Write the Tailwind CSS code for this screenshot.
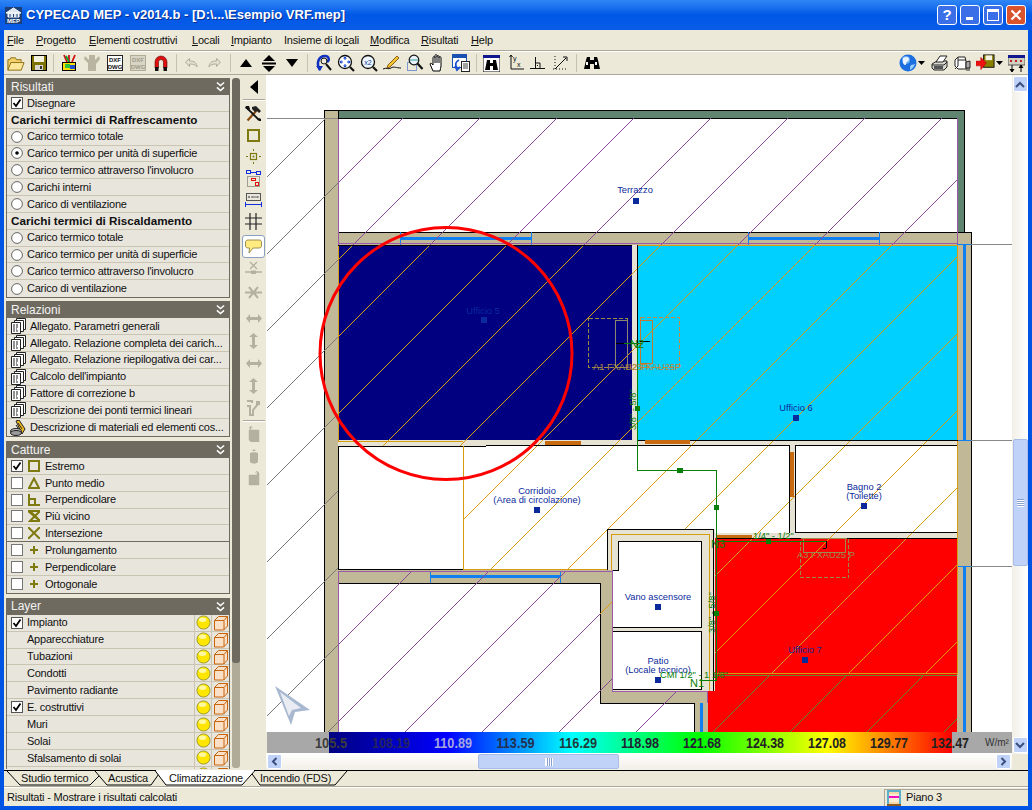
<!DOCTYPE html>
<html lang="it">
<head>
<meta charset="utf-8">
<title>CYPECAD MEP</title>
<script src="https://cdn.jsdelivr.net/npm/@tailwindcss/browser@4"></script>
</head>
<body class="w-[1032px] h-[810px] overflow-hidden bg-[#0054e3] font-['Liberation_Sans',sans-serif] text-[#111] flex flex-col">

<svg class="absolute w-0 h-0">
  <defs>
    <symbol id="doc" viewBox="0 0 15 16">
      <path d="M5.5 .5h9v11h-9z" fill="#fff" stroke="#222"/><path d="M3.5 2.5h9v11h-9z" fill="#fff" stroke="#222"/><path d="M.5 4.5h9v11h-9z" fill="#fff" stroke="#222"/>
      <path d="M2 7h6M2 9h6M2 11h4M2 13h6" stroke="#222" stroke-dasharray="2 1"/>
    </symbol>
    <symbol id="bulb" viewBox="0 0 16 16">
      <circle cx="8" cy="8" r="7" fill="#ffe600" stroke="#9a9a30"/><ellipse cx="7" cy="5" rx="4" ry="2.4" fill="#fff8a0"/>
    </symbol>
    <symbol id="cube" viewBox="0 0 16 16">
      <path d="M1.5 5.500l4-4h9v9.500l-4 4h-9z" fill="#fbe0c8" stroke="#c8640c"/><path d="M1.500 5.500h9.500v9.500M11 5.500l3.500-4" fill="none" stroke="#c8640c"/>
    </symbol>
    <symbol id="chev" viewBox="0 0 10 12">
      <path d="M1 1.500l4 3.500 4-3.500M1 7l4 3.500L9 7" fill="none" stroke="#fff" stroke-width="1.600"/>
    </symbol>
    <symbol id="checked" viewBox="0 0 12 12">
      <rect x=".5" y=".5" width="11" height="11" fill="#fff" stroke="#555"/><path d="M2.500 6l2.500 3 4.500-6.500" fill="none" stroke="#000" stroke-width="1.800"/>
    </symbol>
    <symbol id="unchecked" viewBox="0 0 12 12">
      <rect x=".5" y=".5" width="11" height="11" fill="#fff" stroke="#777"/>
    </symbol>
    <symbol id="radio" viewBox="0 0 12 12">
      <circle cx="6" cy="6" r="5.400" fill="#fff" stroke="#666"/>
    </symbol>
    <symbol id="radioon" viewBox="0 0 12 12">
      <circle cx="6" cy="6" r="5.400" fill="#fff" stroke="#666"/><circle cx="6" cy="6" r="1.800" fill="#000"/>
    </symbol>
    <symbol id="plus" viewBox="0 0 12 12">
      <path d="M6 2v8M2 6h8" stroke="#7f7a10" stroke-width="2"/>
    </symbol>
    <path id="hatch" d="M267 177L369 75M267 254L446 75M267 331L523 75M267 408L600 75M267 485L677 75M267 562L754 75M267 639L831 75M267 716L908 75M267 793L985 75M267 870L1062 75M267 947L1139 75M267 1024L1216 75M267 1101L1293 75M267 1178L1370 75M267 1255L1447 75M267 1332L1524 75M267 1409L1601 75" fill="none"/>
    <clipPath id="cGray"><rect x="267" y="118" width="71" height="614"/></clipPath>
    <clipPath id="cPurple"><rect x="338" y="118" width="619" height="127"/><rect x="338" y="572" width="274" height="160"/><rect x="612" y="691" width="95" height="41"/></clipPath>
    <clipPath id="cOrange"><rect x="338" y="245" width="619" height="325"/><rect x="600" y="529" width="357" height="145"/></clipPath>
    <clipPath id="cGreen"><rect x="709" y="675" width="248" height="57"/></clipPath>
    <linearGradient id="heat" x1="0" x2="1" y1="0" y2="0">
      <stop offset="0" stop-color="#000080"/><stop offset=".19" stop-color="#0000ff"/><stop offset=".39" stop-color="#00ffff"/><stop offset=".594" stop-color="#00ff00"/><stop offset=".798" stop-color="#ffff00"/><stop offset="1" stop-color="#ff0000"/>
    </linearGradient>
  </defs>
</svg>

<!-- Title bar -->
<header class="h-[30px] shrink-0 flex items-center pl-[5px] pr-[6px] bg-linear-to-b from-[#2f86f5] via-[#0058e6] to-[#0a5ce8]">
  <svg class="w-[17px] h-[17px] mt-[1px]" viewBox="0 0 17 17">
    <rect width="17" height="17" fill="#1d3f78"/><path d="M8.500 1L1 6h15zM3 6v4h11V6" fill="#dfe6ef" stroke="#fff"/><path d="M5 7v3M8.500 7v3M12 7v3" stroke="#1d3f78"/>
    <text x="8.500" y="15.500" text-anchor="middle" font-size="6" font-weight="700" fill="#fff">MEP</text>
  </svg>
  <span class="ml-[4px] text-white font-bold text-[13px] [text-shadow:1px_1px_0_#0a2f8f]">CYPECAD MEP - v2014.b - [D:\...\Esempio VRF.mep]</span>
  <div class="ml-auto flex gap-[3px]">
    <div class="w-[20px] h-[20px] rounded-[3px] border border-white bg-[#3a6fe8] text-white font-bold text-[15px] leading-[18px] text-center">?</div>
    <div class="w-[20px] h-[20px] rounded-[3px] border border-white bg-[#3a6fe8] flex items-end pl-[5px] pb-[4px]"><div class="w-[7px] h-[3px] bg-white"></div></div>
    <div class="w-[20px] h-[20px] rounded-[3px] border border-white bg-[#3a6fe8] p-[3px]"><div class="w-full h-full border border-white border-t-[3px]"></div></div>
    <div class="w-[20px] h-[20px] rounded-[3px] border border-white bg-[#d9532c] flex items-center justify-center">
      <svg class="w-[12px] h-[12px]" viewBox="0 0 12 12"><path d="M1.500 1.500l9 9M10.500 1.500l-9 9" stroke="#fff" stroke-width="2.200"/></svg>
    </div>
  </div>
</header>

<div class="mx-[4px] h-[776px] shrink-0 bg-[#ece9d8] flex flex-col">
  <!-- Menu -->
  <nav class="h-[20px] shrink-0 flex items-center text-[11px] tracking-[-.2px] pl-[3px]">
    <span class="w-[29px]"><u>F</u>ile</span>
    <span class="w-[53px]"><u>P</u>rogetto</span>
    <span class="w-[103px]"><u>E</u>lementi costruttivi</span>
    <span class="w-[39px]"><u>L</u>ocali</span>
    <span class="w-[53px]"><u>I</u>mpianto</span>
    <span class="w-[86px]">Insieme di lo<u>c</u>ali</span>
    <span class="w-[51px]"><u>M</u>odifica</span>
    <span class="w-[50px]"><u>R</u>isultati</span>
    <span><u>H</u>elp</span>
  </nav>
  <div class="h-[2px] shrink-0 border-t border-[#aca899] border-b-white bg-white"></div>
  <!-- Toolbar -->
  <div class="h-[23px] shrink-0 flex items-center border-b border-[#aca899]">
    <div class="w-[23px] h-[22px] flex items-center justify-center"><svg class="w-[19px] h-[19px]" viewBox="0 0 20 20"><path d="M2 17V6h2l1-2h5l1 2h5v2" fill="#f4d16c" stroke="#8a6a10"/><path d="M2 17l3-8h14l-3 8z" fill="#ffe79a" stroke="#8a6a10"/></svg></div>
    <div class="w-[23px] h-[22px] flex items-center justify-center"><svg class="w-[16px] h-[16px]" viewBox="0 0 16 16"><rect x=".5" y=".5" width="15" height="15" fill="#7f7300" stroke="#000"/><rect x="3" y="1" width="10" height="6" fill="#f4f2e0"/><rect x="4" y="10" width="8" height="5" fill="#d8d8d0"/><rect x="9" y="11" width="2" height="3" fill="#333"/></svg></div>
    <div class="w-[7px] flex justify-center"><div class="w-[1px] h-[18px] bg-[#c5c2b0]"></div></div>
    <div class="w-[23px] h-[22px] flex items-center justify-center"><svg class="w-[18px] h-[18px]" viewBox="0 0 18 18"><path d="M4 1l3 7M9 1v7M15 1l-3 7" stroke="#d01010" stroke-width="1.800"/><path d="M6 2l3 6" stroke="#10a030" stroke-width="1.800"/><rect x="2.500" y="8.500" width="13" height="8" fill="#ffe000" stroke="#000"/><rect x="5" y="10" width="5" height="4" fill="#30c040"/><rect x="10" y="11" width="5" height="4" fill="#2050d0"/></svg></div>
    <div class="w-[23px] h-[22px] flex items-center justify-center"><svg class="w-[18px] h-[18px]" viewBox="0 0 18 18"><path d="M2 2l4 4V1h6v5l4-4 1 3-4 5v7H5V9L1 5z" fill="#b8b4a0"/></svg></div>
    <div class="w-[23px] h-[22px] flex items-center justify-center"><svg class="w-[18px] h-[18px]" viewBox="0 0 18 18"><rect x="1.500" y="1.500" width="15" height="15" fill="#fff" stroke="#222"/><text x="9" y="8" text-anchor="middle" font-size="6" font-weight="700" fill="#111">DXF</text><text x="9" y="14.500" text-anchor="middle" font-size="6" font-weight="700" fill="#111">DWG</text></svg></div>
    <div class="w-[23px] h-[22px] flex items-center justify-center"><svg class="w-[18px] h-[18px]" viewBox="0 0 18 18"><rect x="1.500" y="1.500" width="15" height="15" fill="#d8d5c5" stroke="#b0ac9a"/><text x="9" y="8" text-anchor="middle" font-size="6" font-weight="700" fill="#a09c8a">DXF</text><text x="9" y="14.500" text-anchor="middle" font-size="6" font-weight="700" fill="#a09c8a">DWG</text></svg></div>
    <div class="w-[23px] h-[22px] flex items-center justify-center"><svg class="w-[16px] h-[18px]" viewBox="0 0 16 18"><path d="M2 14V8a6 6 0 0 1 12 0v6h-3.500V8a2.500 2.500 0 0 0-5 0v6z" fill="#e01010" stroke="#500" stroke-width=".6"/><rect x="2" y="13" width="3.500" height="4" fill="#111"/><rect x="10.500" y="13" width="3.500" height="4" fill="#111"/></svg></div>
    <div class="w-[8px] flex justify-center"><div class="w-[1px] h-[18px] bg-[#c5c2b0]"></div></div>
    <div class="w-[23px] h-[22px] flex items-center justify-center"><svg class="w-[15px] h-[13px]" viewBox="0 0 15 13"><path d="M1.500 5l4-3.500V4c5 0 7.500 2 7.500 6-1.500-2.500-3.500-3-7.500-3v2.500z" fill="#e4e1d0" stroke="#b0ac9a"/></svg></div>
    <div class="w-[23px] h-[22px] flex items-center justify-center"><svg class="w-[15px] h-[13px]" viewBox="0 0 15 13"><path d="M13.500 5l-4-3.500V4C4.500 4 2 6 2 10c1.500-2.500 3.500-3 7.500-3v2.500z" fill="#e4e1d0" stroke="#b0ac9a"/></svg></div>
    <div class="w-[8px] flex justify-center"><div class="w-[1px] h-[18px] bg-[#c5c2b0]"></div></div>
    <div class="w-[23px] h-[22px] flex items-center justify-center"><svg class="w-[12px] h-[8px]" viewBox="0 0 12 8"><path d="M6 0l6 8H0z" fill="#000"/></svg></div>
    <div class="w-[23px] h-[22px] flex items-center justify-center"><svg class="w-[14px] h-[17px]" viewBox="0 0 14 17"><path d="M7 0l6 6H1zM7 17l-6-6h12zM0 8h14" fill="#000"/><rect y="7.500" width="14" height="2" fill="#000"/></svg></div>
    <div class="w-[23px] h-[22px] flex items-center justify-center"><svg class="w-[12px] h-[8px]" viewBox="0 0 12 8"><path d="M6 8L0 0h12z" fill="#000"/></svg></div>
    <div class="w-[8px] flex justify-center"><div class="w-[1px] h-[18px] bg-[#c5c2b0]"></div></div>
    <div class="w-[23px] h-[22px] flex items-center justify-center"><svg class="w-[18px] h-[18px]" viewBox="0 0 18 18"><path d="M6 16C2 10 4 2 11 2c4 0 5 4 2 6" fill="none" stroke="#1030c0" stroke-width="2.500"/><path d="M2 12l4 5 3-5z" fill="#1030c0"/><path d="M12 10l5 6" stroke="#111" stroke-width="2"/><circle cx="10" cy="7" r="3" fill="none" stroke="#111"/></svg></div>
    <div class="w-[23px] h-[22px] flex items-center justify-center"><svg class="w-[18px] h-[18px]" viewBox="0 0 18 18"><circle cx="8" cy="8" r="6.500" fill="#fff" stroke="#111" stroke-width="1.300"/><path d="M8 3v10M3 8h10" stroke="#1040d0" stroke-width="1" stroke-dasharray="3 4"/><path d="M8 2.500l-2 2h4zM8 13.500l-2-2h4zM2.500 8l2-2v4zM13.500 8l-2-2v4z" fill="#1040d0"/><path d="M13 13l4 4" stroke="#111" stroke-width="2.200"/></svg></div>
    <div class="w-[23px] h-[22px] flex items-center justify-center"><svg class="w-[18px] h-[18px]" viewBox="0 0 18 18"><circle cx="8" cy="8" r="6.500" fill="#eef6ff" stroke="#111" stroke-width="1.300"/><text x="8" y="10.500" text-anchor="middle" font-size="7" fill="#1040a0">x2</text><path d="M13 13l4 4" stroke="#111" stroke-width="2.200"/></svg></div>
    <div class="w-[23px] h-[22px] flex items-center justify-center"><svg class="w-[18px] h-[18px]" viewBox="0 0 18 18"><path d="M5 11L14 2l2 2-9 9-3 1z" fill="#f4c430" stroke="#704000" stroke-width=".8"/><path d="M0 15c4-2 5 1 8-1s5 0 10 0" fill="none" stroke="#111"/></svg></div>
    <div class="w-[23px] h-[22px] flex items-center justify-center"><svg class="w-[18px] h-[18px]" viewBox="0 0 18 18"><rect x="1.500" y="8.500" width="9" height="8" fill="none" stroke="#1040d0" stroke-dasharray="1 1"/><circle cx="8" cy="6" r="4.800" fill="#e8f0f8" stroke="#111" stroke-width="1.200"/><path d="M4 6h8" stroke="#30a0a0"/><path d="M11.500 9.500l5 5.500" stroke="#111" stroke-width="2.200"/></svg></div>
    <div class="w-[23px] h-[22px] flex items-center justify-center"><svg class="w-[17px] h-[18px]" viewBox="0 0 17 18"><path d="M4 17L1 10c0-1 2-1 3 1V4c0-2 2-2 2 0V2c0-2 2-2 2 0v1c0-2 2-2 2 0v1c0-2 2-2 2 0v8c0 2-1 3-1 5z" fill="#fff" stroke="#000"/><path d="M6 4v5M8 3v6M10 4v5" stroke="#000"/></svg></div>
    <div class="w-[23px] h-[22px] flex items-center justify-center"><svg class="w-[18px] h-[18px]" viewBox="0 0 18 18"><rect x=".5" y=".5" width="14" height="13" fill="#fff" stroke="#1a50b0"/><rect x="1" y="1" width="13" height="3" fill="#1a50b0"/><rect x="9.500" y="7.500" width="8" height="10" fill="#fff" stroke="#222"/><path d="M11 10h5M11 12h5M11 14h5" stroke="#444"/><path d="M7 6C3 8 3 11 5 14M3 12l2 4 3-3" fill="none" stroke="#1a50d0" stroke-width="1.800"/></svg></div>
    <div class="w-[8px] flex justify-center"><div class="w-[1px] h-[18px] bg-[#c5c2b0]"></div></div>
    <div class="w-[23px] h-[22px] flex items-center justify-center"><svg class="w-[17px] h-[17px]" viewBox="0 0 17 17"><rect width="17" height="17" fill="#fff" stroke="#111"/><rect width="17" height="3" fill="#101890"/><path d="M2 15l2-10h3v3h3V5h3l2 10H10v-4H7v4z" fill="#000"/></svg></div>
    <div class="w-[23px] h-[22px] flex items-center justify-center"><svg class="w-[18px] h-[18px]" viewBox="0 0 18 18"><path d="M5 1v14h13" fill="none" stroke="#111"/><path d="M3.500 3L5 1l1.500 2" fill="none" stroke="#111"/><text x="7" y="7" font-size="7" fill="#111">y</text><text x="11" y="13" font-size="7" fill="#111">x</text></svg></div>
    <div class="w-[23px] h-[22px] flex items-center justify-center"><svg class="w-[16px] h-[16px]" viewBox="0 0 16 16"><path d="M0 13.500h15M5.500 2v11.500M5.500 8h4.500v5.500" fill="none" stroke="#111"/><rect x="7" y="10" width="1" height="1" fill="#111"/></svg></div>
    <div class="w-[23px] h-[22px] flex items-center justify-center"><svg class="w-[17px] h-[17px]" viewBox="0 0 17 17"><path d="M3 14L14 3" stroke="#111"/><path d="M11 2l4 0v4" fill="none" stroke="#111"/><path d="M3 1v15M1 14h15" stroke="#111" stroke-dasharray="1 2"/></svg></div>
    <div class="w-[8px] flex justify-center"><div class="w-[1px] h-[18px] bg-[#c5c2b0]"></div></div>
    <div class="w-[23px] h-[22px] flex items-center justify-center"><svg class="w-[16px] h-[14px]" viewBox="0 0 16 14"><path d="M0 13l2-9 1-3h3v3h4V1h3l1 3 2 9h-6V8H6v5z" fill="#000"/><rect x="2" y="6" width="2" height="3" fill="#fff"/><rect x="11" y="6" width="2" height="3" fill="#fff"/></svg></div>
    <div class="ml-auto flex items-center pr-[3px]">
      <svg class="w-[18px] h-[18px]" viewBox="0 0 18 18"><circle cx="9" cy="9" r="8.500" fill="#1b6fe0"/><circle cx="7" cy="6" r="4" fill="#8cc4ff" opacity=".7"/><path d="M4 4c3-2 6-1 6 1 0 3-3 2-3 5 0 2-2 1-3-1z" fill="#e8f4ff"/><path d="M12 11c2 0 3-1 4-1-1 3-3 5-5 6 0-2 0-4 1-5z" fill="#9fd0ff"/></svg>
      <svg class="w-[7px] h-[4px] ml-[1px] mr-[6px]" viewBox="0 0 7 4"><path d="M0 0h7L3.500 4z" fill="#000"/></svg>
      <svg class="w-[17px] h-[18px] mr-[6px]" viewBox="0 0 17 18"><path d="M1 10l5-3h10v6l-3 3H3l-2-2z" fill="#d8d8d0" stroke="#222"/><path d="M5 8l4-6h7l-4 6z" fill="#fff" stroke="#222"/><path d="M1 11h12l3-3" fill="none" stroke="#222"/><rect x="3" y="12" width="9" height="3" fill="#555"/></svg>
      <svg class="w-[17px] h-[16px] mr-[5px]" viewBox="0 0 17 16"><path d="M1 5l3-3h7l1 4v8H4L1 11z" fill="#fff" stroke="#222"/><path d="M4 2v9l-3 3M4 5h8" fill="none" stroke="#222"/><path d="M12 7l4-1v7h-4z" fill="#aaa" stroke="#222"/><path d="M13 13v3M15 13v3" stroke="#222"/></svg>
      <svg class="w-[19px] h-[18px]" viewBox="0 0 20 18"><rect x="8" y=".5" width="11" height="13" fill="#8a8000" stroke="#111"/><rect x="10" y="1" width="7" height="5" fill="#f4f2e0"/><path d="M0 7h5V3l6 6-6 7v-4H0z" fill="#f01010" stroke="#a00" stroke-width=".5"/></svg>
      <svg class="w-[7px] h-[4px] ml-[1px] mr-[5px]" viewBox="0 0 7 4"><path d="M0 0h7L3.500 4z" fill="#000"/></svg>
      <svg class="w-[17px] h-[17px]" viewBox="0 0 17 17"><rect width="17" height="10" fill="#d0cfc0" stroke="#555"/><rect width="17" height="3" fill="#101890"/><path d="M3 5v2M8 5v2M13 5v2" stroke="#c02020" stroke-width="2"/><path d="M4 10v6M2 14l2 3 2-3M13 17v-6M11 13l2-3 2 3" fill="#000" stroke="#000"/></svg>
    </div>
  </div>

  <!-- Main -->
  <div class="h-[695px] shrink-0 flex">
    <!-- Left panels -->
    <aside class="w-[237px] h-[694px] shrink-0 flex overflow-hidden pt-[3px] pl-[2px]">
      <div class="w-[224px] shrink-0 flex flex-col text-[11px] tracking-[-.22px]">
        <div class="h-[17px] shrink-0 bg-[#6e6a60] text-[#f2f2f2] text-[12px] tracking-normal flex items-center justify-between px-[5px]"><span>Risultati</span><svg class="w-[9px] h-[11px]"><use href="#chev"/></svg></div>
        <div class="border-x border-b border-[#6e6a60] bg-[#e8e5dd] mb-[3px]">
          <div class="h-[16.850px] flex items-center border-b border-[#c9c5b2] pl-[4px] gap-[4px]"><svg class="w-[12px] h-[12px]"><use href="#checked"/></svg>Disegnare</div>
          <div class="h-[16.850px] flex items-center border-b border-[#c9c5b2] pl-[4px] font-bold text-[11.700px] tracking-normal">Carichi termici di Raffrescamento</div>
          <div class="h-[16.850px] flex items-center border-b border-[#c9c5b2] pl-[4px] gap-[4px]"><svg class="w-[12px] h-[12px]"><use href="#radio"/></svg>Carico termico totale</div>
          <div class="h-[16.850px] flex items-center border-b border-[#c9c5b2] pl-[4px] gap-[4px]"><svg class="w-[12px] h-[12px]"><use href="#radioon"/></svg>Carico termico per unità di superficie</div>
          <div class="h-[16.850px] flex items-center border-b border-[#c9c5b2] pl-[4px] gap-[4px]"><svg class="w-[12px] h-[12px]"><use href="#radio"/></svg>Carico termico attraverso l'involucro</div>
          <div class="h-[16.850px] flex items-center border-b border-[#c9c5b2] pl-[4px] gap-[4px]"><svg class="w-[12px] h-[12px]"><use href="#radio"/></svg>Carichi interni</div>
          <div class="h-[16.850px] flex items-center border-b border-[#c9c5b2] pl-[4px] gap-[4px]"><svg class="w-[12px] h-[12px]"><use href="#radio"/></svg>Carico di ventilazione</div>
          <div class="h-[16.850px] flex items-center border-b border-[#c9c5b2] pl-[4px] font-bold text-[11.700px] tracking-normal">Carichi termici di Riscaldamento</div>
          <div class="h-[16.850px] flex items-center border-b border-[#c9c5b2] pl-[4px] gap-[4px]"><svg class="w-[12px] h-[12px]"><use href="#radio"/></svg>Carico termico totale</div>
          <div class="h-[16.850px] flex items-center border-b border-[#c9c5b2] pl-[4px] gap-[4px]"><svg class="w-[12px] h-[12px]"><use href="#radio"/></svg>Carico termico per unità di superficie</div>
          <div class="h-[16.850px] flex items-center border-b border-[#c9c5b2] pl-[4px] gap-[4px]"><svg class="w-[12px] h-[12px]"><use href="#radio"/></svg>Carico termico attraverso l'involucro</div>
          <div class="h-[16.850px] flex items-center pl-[4px] gap-[4px]"><svg class="w-[12px] h-[12px]"><use href="#radio"/></svg>Carico di ventilazione</div>
        </div>

        <div class="h-[17px] shrink-0 bg-[#6e6a60] text-[#f2f2f2] text-[12px] tracking-normal flex items-center justify-between px-[5px]"><span>Relazioni</span><svg class="w-[9px] h-[11px]"><use href="#chev"/></svg></div>
        <div class="border-x border-b border-[#6e6a60] bg-[#e8e5dd] mb-[4px] whitespace-nowrap">
          <div class="h-[16.850px] flex items-center border-b border-[#c9c5b2] pl-[4px] gap-[4px]"><svg class="w-[15px] h-[16px] shrink-0"><use href="#doc"/></svg>Allegato. Parametri generali</div>
          <div class="h-[16.850px] flex items-center border-b border-[#c9c5b2] pl-[4px] gap-[4px]"><svg class="w-[15px] h-[16px] shrink-0"><use href="#doc"/></svg>Allegato. Relazione completa dei carich...</div>
          <div class="h-[16.850px] flex items-center border-b border-[#c9c5b2] pl-[4px] gap-[4px]"><svg class="w-[15px] h-[16px] shrink-0"><use href="#doc"/></svg>Allegato. Relazione riepilogativa dei car...</div>
          <div class="h-[16.850px] flex items-center border-b border-[#c9c5b2] pl-[4px] gap-[4px]"><svg class="w-[15px] h-[16px] shrink-0"><use href="#doc"/></svg>Calcolo dell'impianto</div>
          <div class="h-[16.850px] flex items-center border-b border-[#c9c5b2] pl-[4px] gap-[4px]"><svg class="w-[15px] h-[16px] shrink-0"><use href="#doc"/></svg>Fattore di correzione b</div>
          <div class="h-[16.850px] flex items-center border-b border-[#c9c5b2] pl-[4px] gap-[4px]"><svg class="w-[15px] h-[16px] shrink-0"><use href="#doc"/></svg>Descrizione dei ponti termici lineari</div>
          <div class="h-[16.850px] flex items-center pl-[3px] gap-[4px]"><svg class="w-[16px] h-[16px] shrink-0" viewBox="0 0 16 16"><path d="M6 1l3-1 6 9-3 5z" fill="#f2b820" stroke="#222"/><path d="M8 3l4 6M6 5l4 6" stroke="#222"/><ellipse cx="6" cy="11" rx="5.500" ry="2.500" fill="#c8c8c8" stroke="#222"/><ellipse cx="6" cy="13" rx="5.500" ry="2.500" fill="#9a9a9a" stroke="#222"/></svg>Descrizione di materiali ed elementi cos...</div>
        </div>

        <div class="h-[17px] shrink-0 bg-[#6e6a60] text-[#f2f2f2] text-[12px] tracking-normal flex items-center justify-between px-[5px]"><span>Catture</span><svg class="w-[9px] h-[11px]"><use href="#chev"/></svg></div>
        <div class="border-x border-b border-[#6e6a60] bg-[#e8e5dd] mb-[4px]">
          <div class="h-[16.850px] flex items-center border-b border-[#c9c5b2] pl-[4px]"><svg class="w-[12px] h-[12px]"><use href="#checked"/></svg><svg class="w-[12px] h-[12px] ml-[5px] mr-[5px]" viewBox="0 0 12 12"><rect x="1" y="1" width="10" height="10" fill="none" stroke="#7f7a10" stroke-width="2"/></svg>Estremo</div>
          <div class="h-[16.850px] flex items-center border-b border-[#c9c5b2] pl-[4px]"><svg class="w-[12px] h-[12px]"><use href="#unchecked"/></svg><svg class="w-[12px] h-[12px] ml-[5px] mr-[5px]" viewBox="0 0 12 12"><path d="M6 1.500L11 11H1z" fill="none" stroke="#7f7a10" stroke-width="2"/></svg>Punto medio</div>
          <div class="h-[16.850px] flex items-center border-b border-[#c9c5b2] pl-[4px]"><svg class="w-[12px] h-[12px]"><use href="#unchecked"/></svg><svg class="w-[12px] h-[12px] ml-[5px] mr-[5px]" viewBox="0 0 12 12"><path d="M1 0v11h11M1 5h6v6" fill="none" stroke="#7f7a10" stroke-width="2"/></svg>Perpendicolare</div>
          <div class="h-[16.850px] flex items-center border-b border-[#c9c5b2] pl-[4px]"><svg class="w-[12px] h-[12px]"><use href="#unchecked"/></svg><svg class="w-[12px] h-[12px] ml-[5px] mr-[5px]" viewBox="0 0 12 12"><path d="M0 1h12L2 11h10z" fill="none" stroke="#7f7a10" stroke-width="2"/><path d="M2 1l10 10" stroke="#7f7a10" stroke-width="2"/></svg>Più vicino</div>
          <div class="h-[16.850px] flex items-center border-b border-[#6e6a60] pl-[4px]"><svg class="w-[12px] h-[12px]"><use href="#unchecked"/></svg><svg class="w-[12px] h-[12px] ml-[5px] mr-[5px]" viewBox="0 0 12 12"><path d="M0 0l12 12M12 0L0 12" stroke="#7f7a10" stroke-width="2"/></svg>Intersezione</div>
          <div class="h-[16.850px] flex items-center border-b border-[#c9c5b2] pl-[4px]"><svg class="w-[12px] h-[12px]"><use href="#unchecked"/></svg><svg class="w-[12px] h-[12px] ml-[5px] mr-[5px]"><use href="#plus"/></svg>Prolungamento</div>
          <div class="h-[16.850px] flex items-center border-b border-[#c9c5b2] pl-[4px]"><svg class="w-[12px] h-[12px]"><use href="#unchecked"/></svg><svg class="w-[12px] h-[12px] ml-[5px] mr-[5px]"><use href="#plus"/></svg>Perpendicolare</div>
          <div class="h-[16.850px] flex items-center pl-[4px]"><svg class="w-[12px] h-[12px]"><use href="#unchecked"/></svg><svg class="w-[12px] h-[12px] ml-[5px] mr-[5px]"><use href="#plus"/></svg>Ortogonale</div>
        </div>

        <div class="h-[17px] shrink-0 bg-[#6e6a60] text-[#f2f2f2] text-[12px] tracking-normal flex items-center justify-between px-[5px]"><span>Layer</span><svg class="w-[9px] h-[11px]"><use href="#chev"/></svg></div>
        <div class="border-x border-[#6e6a60] bg-[#e8e5dd]">
          <div class="h-[16.900px] flex items-center border-b border-[#c9c5b2] pl-[4px]"><svg class="w-[12px] h-[12px] mr-[4px]"><use href="#checked"/></svg>Impianto<div class="ml-auto h-full flex border-l border-[#c9c5b2]"><div class="w-[17px] flex items-center justify-center border-r border-[#c9c5b2]"><svg class="w-[15px] h-[15px]"><use href="#bulb"/></svg></div><div class="w-[17px] flex items-center justify-center"><svg class="w-[16px] h-[16px]"><use href="#cube"/></svg></div></div></div>
          <div class="h-[16.900px] flex items-center border-b border-[#c9c5b2] pl-[20px]">Apparecchiature<div class="ml-auto h-full flex border-l border-[#c9c5b2]"><div class="w-[17px] flex items-center justify-center border-r border-[#c9c5b2]"><svg class="w-[15px] h-[15px]"><use href="#bulb"/></svg></div><div class="w-[17px] flex items-center justify-center"><svg class="w-[16px] h-[16px]"><use href="#cube"/></svg></div></div></div>
          <div class="h-[16.900px] flex items-center border-b border-[#c9c5b2] pl-[20px]">Tubazioni<div class="ml-auto h-full flex border-l border-[#c9c5b2]"><div class="w-[17px] flex items-center justify-center border-r border-[#c9c5b2]"><svg class="w-[15px] h-[15px]"><use href="#bulb"/></svg></div><div class="w-[17px] flex items-center justify-center"><svg class="w-[16px] h-[16px]"><use href="#cube"/></svg></div></div></div>
          <div class="h-[16.900px] flex items-center border-b border-[#c9c5b2] pl-[20px]">Condotti<div class="ml-auto h-full flex border-l border-[#c9c5b2]"><div class="w-[17px] flex items-center justify-center border-r border-[#c9c5b2]"><svg class="w-[15px] h-[15px]"><use href="#bulb"/></svg></div><div class="w-[17px] flex items-center justify-center"><svg class="w-[16px] h-[16px]"><use href="#cube"/></svg></div></div></div>
          <div class="h-[16.900px] flex items-center border-b border-[#c9c5b2] pl-[20px]">Pavimento radiante<div class="ml-auto h-full flex border-l border-[#c9c5b2]"><div class="w-[17px] flex items-center justify-center border-r border-[#c9c5b2]"><svg class="w-[15px] h-[15px]"><use href="#bulb"/></svg></div><div class="w-[17px] flex items-center justify-center"><svg class="w-[16px] h-[16px]"><use href="#cube"/></svg></div></div></div>
          <div class="h-[16.900px] flex items-center border-b border-[#c9c5b2] pl-[4px]"><svg class="w-[12px] h-[12px] mr-[4px]"><use href="#checked"/></svg>E. costruttivi<div class="ml-auto h-full flex border-l border-[#c9c5b2]"><div class="w-[17px] flex items-center justify-center border-r border-[#c9c5b2]"><svg class="w-[15px] h-[15px]"><use href="#bulb"/></svg></div><div class="w-[17px] flex items-center justify-center"><svg class="w-[16px] h-[16px]"><use href="#cube"/></svg></div></div></div>
          <div class="h-[16.900px] flex items-center border-b border-[#c9c5b2] pl-[20px]">Muri<div class="ml-auto h-full flex border-l border-[#c9c5b2]"><div class="w-[17px] flex items-center justify-center border-r border-[#c9c5b2]"><svg class="w-[15px] h-[15px]"><use href="#bulb"/></svg></div><div class="w-[17px] flex items-center justify-center"><svg class="w-[16px] h-[16px]"><use href="#cube"/></svg></div></div></div>
          <div class="h-[16.900px] flex items-center border-b border-[#c9c5b2] pl-[20px]">Solai<div class="ml-auto h-full flex border-l border-[#c9c5b2]"><div class="w-[17px] flex items-center justify-center border-r border-[#c9c5b2]"><svg class="w-[15px] h-[15px]"><use href="#bulb"/></svg></div><div class="w-[17px] flex items-center justify-center"><svg class="w-[16px] h-[16px]"><use href="#cube"/></svg></div></div></div>
          <div class="h-[16.900px] flex items-center border-b border-[#c9c5b2] pl-[20px]">Sfalsamento di solai<div class="ml-auto h-full flex border-l border-[#c9c5b2]"><div class="w-[17px] flex items-center justify-center border-r border-[#c9c5b2]"><svg class="w-[15px] h-[15px]"><use href="#bulb"/></svg></div><div class="w-[17px] flex items-center justify-center"><svg class="w-[16px] h-[16px]"><use href="#cube"/></svg></div></div></div>
          <div class="h-[16.900px] flex items-center border-b border-[#c9c5b2] pl-[20px]"><div class="ml-auto h-full flex border-l border-[#c9c5b2]"><div class="w-[17px] flex items-center justify-center border-r border-[#c9c5b2]"><svg class="w-[15px] h-[15px]"><use href="#bulb"/></svg></div><div class="w-[17px] flex items-center justify-center"><svg class="w-[16px] h-[16px]"><use href="#cube"/></svg></div></div></div>
        </div>
      </div>
      <div class="ml-[2px] w-[8px] h-[690px] shrink-0 bg-[#b0ab99] rounded-[3px] overflow-hidden"><div class="h-[585px] bg-[#6e6a60] rounded-[3px]"></div></div>
    </aside>

    <!-- Tool strip -->
    <div class="w-[25px] shrink-0 flex flex-col items-center pt-[1px] text-[#b5b1a0]">
      <div class="h-[22px] w-full flex items-center justify-center"><svg class="w-[8px] h-[14px]" viewBox="0 0 8 14"><path d="M8 0v14L0 7z" fill="#000"/></svg></div>
      <div class="w-[22px] h-[2px] mt-[1px] mb-[2px] border-t border-[#aca899] bg-white"></div>
      <div class="h-[21.600px] w-full flex items-center justify-center"><svg class="w-[17px] h-[17px]" viewBox="0 0 17 17"><path d="M2.500 15.500L12 5" stroke="#8a4a10" stroke-width="2.200"/><path d="M7 2l4-1 5 5-2 2-2-2-2 1-3-3z" fill="#222"/><path d="M2 3l12 12" stroke="#111" stroke-width="1.800"/><path d="M1 1l3 0 1 3-2 1-3-2z" fill="#111"/><path d="M14 13l2 1 0 2-2 0-1-2z" fill="#111"/></svg></div>
      <div class="h-[21.600px] w-full flex items-center justify-center"><svg class="w-[13px] h-[13px]" viewBox="0 0 13 13"><rect x="1" y="1" width="11" height="11" fill="none" stroke="#7f7a10" stroke-width="2"/></svg></div>
      <div class="h-[21.600px] w-full flex items-center justify-center"><svg class="w-[15px] h-[15px]" viewBox="0 0 15 15"><rect x="4.500" y="4.500" width="6" height="6" fill="none" stroke="#7f7a10" stroke-width="1.200"/><circle cx="7.500" cy="7.500" r="1" fill="#7f7a10"/><path d="M7.500 0v2M7.500 13v2M0 7.500h2M13 7.500h2" stroke="#7f7a10"/></svg></div>
      <div class="h-[21.600px] w-full flex items-center justify-center"><svg class="w-[15px] h-[17px]" viewBox="0 0 15 17"><rect x=".5" y=".5" width="4" height="3" fill="none" stroke="#1030e0"/><rect x="10.500" y="1.500" width="4" height="3" fill="none" stroke="#1030e0"/><path d="M5 2.500h5" stroke="#1030e0"/><rect x="1.500" y="6.500" width="12" height="10" fill="none" stroke="#555" stroke-dasharray="1 1"/><rect x="5.500" y="8.500" width="4" height="2" fill="none" stroke="#e01010"/><rect x="9.500" y="12.500" width="3" height="3" fill="none" stroke="#e01010"/></svg></div>
      <div class="h-[21.600px] w-full flex items-center justify-center"><svg class="w-[17px] h-[15px]" viewBox="0 0 17 15"><rect x="1.500" y=".5" width="14" height="7" fill="#e8e5dd" stroke="#555"/><path d="M4 3v3M8 3v3M12 3v3M3 4h11" stroke="#666" stroke-dasharray="2 1"/><path d="M.5 9v5M16.500 9v5M0 11.500h17" stroke="#1030e0"/></svg></div>
      <div class="h-[21.600px] w-full flex items-center justify-center"><svg class="w-[17px] h-[17px]" viewBox="0 0 17 17"><path d="M5 0v17M11 0v17M0 5h17M0 11h17" stroke="#222" stroke-width="1.200"/></svg></div>
      <div class="w-[23px] h-[23px] mt-[2px] rounded-[3px] border border-[#8aa0c0] bg-white flex items-center justify-center"><svg class="w-[17px] h-[15px]" viewBox="0 0 17 15"><path d="M3 1h11c2 0 2.500 1 2.500 2v4c0 1-1 2-2.500 2H8l-4 5 .5-5H3C1.500 9 .5 8 .5 7V3C.5 2 1.500 1 3 1z" fill="#ffeb80" stroke="#9a9050"/></svg></div>
      <div class="h-[22px] w-full flex items-center justify-center"><svg class="w-[17px] h-[15px]" viewBox="0 0 17 15"><path d="M5 1l7 7M12 1L5 8" stroke="currentColor" stroke-width="1.300"/><path d="M0 11h17" stroke="currentColor" stroke-width="1.500"/><rect x="6" y="9.500" width="5" height="3.500" fill="currentColor"/></svg></div>
      <div class="h-[22px] w-full mt-[2px] flex items-center justify-center"><svg class="w-[17px] h-[13px]" viewBox="0 0 17 13"><path d="M0 6.500h17M4 1l9 11M13 1L4 12" stroke="currentColor" stroke-width="2"/></svg></div>
      <div class="h-[22.300px] w-full mt-[4px] flex items-center justify-center"><svg class="w-[16px] h-[9px]" viewBox="0 0 16 9"><path d="M4 0v3h8V0l4 4.500L12 9V6H4v3L0 4.500z" fill="currentColor"/></svg></div>
      <div class="h-[22.300px] w-full flex items-center justify-center"><svg class="w-[9px] h-[16px]" viewBox="0 0 9 16"><path d="M0 4h3v8H0l4.500 4L9 12H6V4h3L4.500 0z" fill="currentColor"/></svg></div>
      <div class="h-[22.300px] w-full flex items-center justify-center"><svg class="w-[16px] h-[9px]" viewBox="0 0 16 9"><path d="M4 0v3h8V0l4 4.500L12 9V6H4v3L0 4.500z" fill="currentColor"/></svg></div>
      <div class="h-[22.300px] w-full flex items-center justify-center"><svg class="w-[9px] h-[16px]" viewBox="0 0 9 16"><path d="M0 4h3v8H0l4.500 4L9 12H6V4h3L4.500 0z" fill="currentColor"/></svg></div>
      <div class="h-[22.300px] w-full flex items-center justify-center"><svg class="w-[15px] h-[16px]" viewBox="0 0 15 16"><path d="M1 1h5v2M1 6h3v9h3v-5l6-7" fill="none" stroke="currentColor" stroke-width="2"/><rect x="10" y="1" width="4" height="4" fill="currentColor"/></svg></div>
      <div class="w-[22px] h-[2px] mt-[1px] mb-[1px] border-t border-[#aca899] bg-white"></div>
      <div class="h-[22.500px] w-full flex items-center justify-center"><svg class="w-[12px] h-[16px]" viewBox="0 0 12 16"><path d="M1 4h10v12H3L1 14zM3 4V0L1 2M3 0l2 2" fill="currentColor" stroke="currentColor" stroke-width=".5"/></svg></div>
      <div class="h-[22.500px] w-full flex items-center justify-center"><svg class="w-[10px] h-[16px]" viewBox="0 0 10 16"><path d="M5 0l2 2H3zM1 4c2-1 6-1 8 0v9c-2 2-6 2-8 0z" fill="currentColor"/></svg></div>
      <div class="h-[22.500px] w-full flex items-center justify-center"><svg class="w-[12px] h-[16px]" viewBox="0 0 12 16"><path d="M1 4h8l2-2v12H1zM9 4V0l2 2M9 0L7 2" fill="currentColor" stroke="currentColor" stroke-width=".5"/></svg></div>
    </div>

    <!-- Canvas column -->
    <div class="w-[746px] shrink-0 flex flex-col">
      <svg class="block w-[746px] h-[657px] bg-white" viewBox="266 75 746 657" shape-rendering="crispEdges">
        <!-- Walls -->
        <rect x="324.500" y="110.500" width="640" height="130" fill="#5f8570" stroke="#000"/>
        <rect x="324.500" y="110.500" width="13.500" height="622" fill="#c0b896" stroke="#000"/>
        <rect x="338" y="118" width="619" height="114" fill="#fff"/>
        <rect x="338" y="232.500" width="633" height="13" fill="#c0b896"/>
        <path d="M338 232.500H971.500V732" fill="none" stroke="#000"/>
        <rect x="957" y="245" width="14" height="487" fill="#c0b896"/>
        <path d="M338 118.500H957.500V232" fill="none" stroke="#000"/>
        <!-- Rooms -->
        <rect x="338" y="245" width="294" height="196" fill="#000080"/>
        <rect x="632" y="245" width="6" height="196" fill="#e6e2d4"/>
        <rect x="638" y="245" width="319" height="195" fill="#00d0ff"/>
        <rect x="338" y="440" width="619" height="6" fill="#e6e2d4"/>
        <rect x="339" y="446" width="618" height="124" fill="#fff"/>
        <rect x="790" y="445" width="5" height="93" fill="#e6e2d4"/>
        <rect x="700" y="533" width="257" height="5" fill="#e6e2d4"/>
        <rect x="713" y="538" width="244" height="153" fill="#ff0000"/>
        <rect x="708" y="691" width="249" height="41" fill="#ff0000"/>
        <rect x="338" y="570" width="274" height="13" fill="#c0b896"/>
        <rect x="600" y="583" width="12" height="120" fill="#c0b896"/>
        <rect x="600" y="691" width="107" height="12" fill="#c0b896"/>
        <rect x="695" y="703" width="13" height="29" fill="#c0b896"/>
        <rect x="339" y="583" width="261" height="149" fill="#fff"/>
        <rect x="600" y="703" width="95" height="29" fill="#fff"/>
        <rect x="700" y="703" width="3" height="29" fill="#1080f0"/>
        <path d="M338 583.500H600.500V703.500H694.500V732" fill="none" stroke="#000"/>
        <!-- Right wall blue -->
        <rect x="963" y="245" width="3" height="195" fill="#1080f0"/>
        <rect x="963" y="566" width="3" height="166" fill="#1080f0"/>
        <path d="M971 244.500H1012M971 440.500H1012M971 566.500H1012M267 118.500H338" stroke="#888"/>
        <path d="M957 244.500H971M957 440.500H971M957 566.500H971" stroke="#1080f0"/>
        <!-- Windows -->
        <path d="M400.500 232V245M531.500 232V245M748.500 232V245M879.500 232V245M430.500 571V583M560.500 571V583" stroke="#1080f0"/>
        <path d="M400 238.500H531M748 238.500H879M430 576.500H560" stroke="#1080f0" stroke-width="3"/>
        <!-- Hatches -->
        <g clip-path="url(#cGray)" stroke="#777"><use href="#hatch"/></g>
        <g clip-path="url(#cPurple)" stroke="#8a4a9a"><use href="#hatch"/></g>
        <g clip-path="url(#cOrange)" stroke="#d89c10"><use href="#hatch"/></g>
        <g clip-path="url(#cGreen)" stroke="#5f8a30"><use href="#hatch"/></g>
        <!-- Outlines -->
        <path d="M338.500 118.500V245M338 243.500H957.500V118M338.500 572V732M338 571.500H612.500V691.500H707.500V703" fill="none" stroke="#9a5aa8"/>
        <path d="M338.500 245.500H632M338.500 245V441.500H463" fill="none" stroke="#d89c10"/>
        <path d="M638 245.500H957M957.500 245V674M463.500 446V569.500H611" fill="none" stroke="#d89c10"/>
        <path d="M338 245.500H632M637.500 245V441M638 440.500H957.500M338 446.500H486M486 445.500H789.500V532.500M795.500 445.500V532.500H957M795 445.500H957M716 538.500H957" fill="none" stroke="#000"/>
        <rect x="339" y="447" width="124" height="122" fill="#fff"/>
        <path d="M338.500 446.500V569.500H463" fill="none" stroke="#000"/>
        <path d="M463.500 446V569.500" stroke="#d89c10"/>
        <path d="M710 673.500H957" stroke="#d89c10"/>
        <path d="M710 675.500H957" stroke="#5f8a30"/>
        <path d="M545 443H581M645 442H690" stroke="#c86a10" stroke-width="4"/>
        <path d="M792 452V497" stroke="#c86a10" stroke-width="4"/>
        <path d="M716 536H752" stroke="#c86a10" stroke-width="3"/>
        <!-- Elevator block -->
        <path d="M607 570V529H715V691H612V570z" fill="#e6e2d4"/>
        <path d="M607.500 570V529.500H713.500M713.500 529V691" fill="none" stroke="#000"/>
        <path d="M611.500 570V534.500H709.500V691" fill="none" stroke="#d89c10"/>
        <path d="M618.500 541.500H701.500V627.500H612.500V570.500H618.500z" fill="#fff" stroke="#000"/>
        <rect x="612.500" y="631.500" width="89" height="58" fill="#fff" stroke="#000"/>
        <path d="M612.500 570V691H707V703" fill="none" stroke="#9a5aa8"/>
        <!-- AC units -->
        <g fill="none">
          <rect x="588.500" y="318.500" width="39" height="49" stroke="#9a8a40" stroke-dasharray="4 2"/>
          <rect x="615.500" y="320.500" width="12" height="47" stroke="#8f8670"/>
          <rect x="640.500" y="317.500" width="39" height="50" stroke="#c08a40" stroke-dasharray="4 2"/>
          <rect x="640.500" y="320.500" width="12" height="43" stroke="#c07a30"/>
          <rect x="800.500" y="538.500" width="48" height="39" stroke="#9a8a50" stroke-dasharray="4 2"/>
          <rect x="803.500" y="538.500" width="42" height="14" stroke="#9a8a50"/>
        </g>
        <path d="M616 343.500H630M640 341.500H650M826.500 541V548M826 548.500H823" stroke="#000"/>
        <!-- Pipes -->
        <path d="M637.500 345V470.500H716.500V680.500H700M716.500 541.500H826M624 343.500H642" fill="none" stroke="#088008"/>
        <path d="M635 406h5v5h-5zM677 468h6v5h-6zM714 505h5v5h-5zM714 611h5v5h-5zM766 539h5v5h-5z" fill="#088008"/>
        <!-- Circle -->
        <circle cx="446" cy="353.500" r="126" fill="none" stroke="#f00" stroke-width="3" shape-rendering="auto"/>
        <!-- Room labels -->
        <g font-size="9.300px" fill="#0a2a9c" text-anchor="middle" shape-rendering="auto">
          <text x="635" y="193">Terrazzo</text>
          <text x="483" y="314" fill="#0a2a9c">Ufficio 5</text>
          <text x="796" y="411">Ufficio 6</text>
          <text x="537" y="494">Corridoio</text>
          <text x="537" y="503">(Area di circolazione)</text>
          <text x="864" y="490">Bagno 2</text>
          <text x="864" y="499">(Toilette)</text>
          <text x="658" y="600">Vano ascensore</text>
          <text x="658" y="664">Patio</text>
          <text x="658" y="673">(Locale tecnico)</text>
          <text x="805" y="653">Ufficio 7</text>
        </g>
        <path d="M633 198h6v6h-6zM481 317h6v6h-6zM793 415h6v6h-6zM534 507h6v6h-6zM861 503h6v6h-6zM655 604h6v6h-6zM655 677h6v6h-6zM802 657h6v6h-6z" fill="#0a2a9c"/>
        <!-- Technical labels -->
        <g font-size="9.300px" shape-rendering="auto">
          <text x="593" y="370" fill="#b09040">A1 FXAU25P</text>
          <text x="626" y="370" fill="#b88838">A2 FXAU25P</text>
          <text x="797" y="558" fill="#9a8a50">A3  FXAU25 P</text>
          <text x="630" y="348" fill="#088008" font-size="11px">N2</text>
          <text x="711" y="548" fill="#088008" font-size="11px">N3</text>
          <text x="690" y="687" fill="#088008" font-size="11px">N1</text>
          <text x="753" y="539" fill="#088008">1/4" - 1/2"</text>
          <text x="660" y="678" fill="#088008">CMI  1/2" - 1 1/8"</text>
          <text transform="translate(715 633) rotate(-90)" fill="#088008">3/8" - 5/8"</text>
          <text transform="translate(636 430) rotate(-90)" fill="#088008">3/8" - 5/8"</text>
        </g>
        <!-- North arrow -->
        <path d="M275 686L310 710L295 712L291 725z" fill="#a8b8d0" shape-rendering="auto"/>
        <path d="M280 692L301 708L292 710L289 716z" fill="#fff" opacity=".75" shape-rendering="auto"/>
      </svg>

      <svg class="block w-[746px] h-[21px]" viewBox="266 732 746 21">
        <rect x="267" y="732" width="745" height="21" fill="#a8a8a8"/>
        <rect x="329" y="732" width="623" height="21" fill="url(#heat)"/>
        <g font-size="14.500px" font-weight="700" text-anchor="middle" lengthAdjust="spacingAndGlyphs">
          <text x="331" y="748" textLength="32" lengthAdjust="spacingAndGlyphs" fill="#3c3c3c">105.5</text>
          <text x="391" y="748" textLength="38" lengthAdjust="spacingAndGlyphs" fill="#24245c">108.19</text>
          <text x="453" y="748" textLength="38" lengthAdjust="spacingAndGlyphs" fill="#a6a6e0">110.89</text>
          <text x="515.500" y="748" textLength="38" lengthAdjust="spacingAndGlyphs" fill="#24304f">113.59</text>
          <text x="578" y="748" textLength="38" lengthAdjust="spacingAndGlyphs" fill="#1e3a3a">116.29</text>
          <text x="640" y="748" textLength="38" lengthAdjust="spacingAndGlyphs" fill="#223">118.98</text>
          <text x="702" y="748" textLength="38" lengthAdjust="spacingAndGlyphs" fill="#223">121.68</text>
          <text x="765" y="748" textLength="38" lengthAdjust="spacingAndGlyphs" fill="#222">124.38</text>
          <text x="827" y="748" textLength="38" lengthAdjust="spacingAndGlyphs" fill="#222">127.08</text>
          <text x="889" y="748" textLength="38" lengthAdjust="spacingAndGlyphs" fill="#222">129.77</text>
          <text x="950" y="748" textLength="38" lengthAdjust="spacingAndGlyphs" fill="#222">132.47</text>
        </g>
        <text x="985" y="746" font-size="10px" fill="#333">W/m²</text>
      </svg>

      <div class="h-[17px] shrink-0 bg-linear-to-b from-white to-[#f1efe6] flex items-center pl-[1px]">
        <div class="w-[15px] h-[15px] rounded-[2px] border border-white bg-[#c1d2f8] flex items-center justify-center"><svg class="w-[7px] h-[9px]" viewBox="0 0 7 9"><path d="M5.500 1L2 4.500 5.500 8" fill="none" stroke="#3a4e80" stroke-width="2"/></svg></div>
        <div class="ml-[196px] w-[141px] h-[15px] rounded-[2px] border border-[#a8bce8] bg-[#c1d2f8] flex items-center justify-center"><div class="w-[8px] h-[8px] border-x border-white bg-[repeating-linear-gradient(90deg,#fff_0,#fff_1px,#8aa0d0_1px,#8aa0d0_2px)]"></div></div>
        <div class="ml-auto mr-[1px] w-[15px] h-[15px] rounded-[2px] border border-white bg-[#c1d2f8] flex items-center justify-center"><svg class="w-[7px] h-[9px]" viewBox="0 0 7 9"><path d="M1.500 1L5 4.500 1.500 8" fill="none" stroke="#3a4e80" stroke-width="2"/></svg></div>
      </div>
    </div>

    <!-- Vertical scrollbar -->
    <div class="w-[16px] shrink-0 flex flex-col">
      <div class="h-[679px] bg-linear-to-r from-[#f1efe6] to-white flex flex-col items-center pt-[1px]">
        <div class="w-[15px] h-[16px] rounded-[2px] border border-white bg-[#c1d2f8] flex items-center justify-center"><svg class="w-[10px] h-[7px]" viewBox="0 0 10 7"><path d="M1 6l4-4 4 4" fill="none" stroke="#3a4e80" stroke-width="2"/></svg></div>
        <div class="mt-[347px] w-[15px] h-[127px] rounded-[2px] border border-[#a8bce8] bg-[#c1d2f8] flex items-center justify-center"><div class="w-[7px] h-[8px] bg-[repeating-linear-gradient(0deg,#fff_0,#fff_1px,#8aa0d0_1px,#8aa0d0_2px)]"></div></div>
        <div class="mt-[171px] w-[15px] h-[16px] rounded-[2px] border border-white bg-[#c1d2f8] flex items-center justify-center"><svg class="w-[10px] h-[7px]" viewBox="0 0 10 7"><path d="M1 1l4 4 4-4" fill="none" stroke="#3a4e80" stroke-width="2"/></svg></div>
      </div>
    </div>
  </div>

  <!-- Tabs -->
  <svg class="block w-[1024px] h-[16px] shrink-0" viewBox="4 770 1024 16" font-size="11px" letter-spacing="-.2" fill="#111">
    <path d="M4 770.500H1028" stroke="#000"/>
    <path d="M7 771l13 14h70l14-14" fill="#ece9d8" stroke="#000"/>
    <path d="M95 771l12 14h44l10-14" fill="#ece9d8" stroke="#000"/>
    <path d="M250 771l10 14h75l12-14" fill="#ece9d8" stroke="#000"/>
    <path d="M155 770.500l11 14.500h76l13-14.500z" fill="#fff" stroke="#000"/>
    <path d="M156 770.500h98" stroke="#fff" stroke-width="1.500"/>
    <text x="21" y="782">Studio termico</text>
    <text x="108" y="782">Acustica</text>
    <text x="169" y="782">Climatizzazione</text>
    <text x="260" y="782">Incendio (FDS)</text>
  </svg>
  <div class="h-[2px] shrink-0 border-t border-[#aca899] bg-white"></div>

  <!-- Status -->
  <footer class="h-[18px] shrink-0 flex items-center text-[11px] tracking-[-.2px] pl-[3px]">
    <span>Risultati - Mostrare i risultati calcolati</span>
    <div class="ml-auto w-[144px] h-[17px] border-l border-t border-[#aca899] flex items-center pl-[2px] gap-[5px]">
      <svg class="w-[14px] h-[16px]" viewBox="0 0 14 16"><rect width="14" height="16" fill="#5ab0c8"/><rect x="2" y="2" width="10" height="12" fill="#f4d8a8"/><path d="M2 5h10M2 9h10M2 11h10" stroke="#fff"/><path d="M2 7h10" stroke="#f010c0" stroke-width="2"/><rect y="14" width="14" height="2" fill="#8a5a20"/></svg>
      <span>Piano 3</span>
    </div>
  </footer>
</div>
</body>
</html>
